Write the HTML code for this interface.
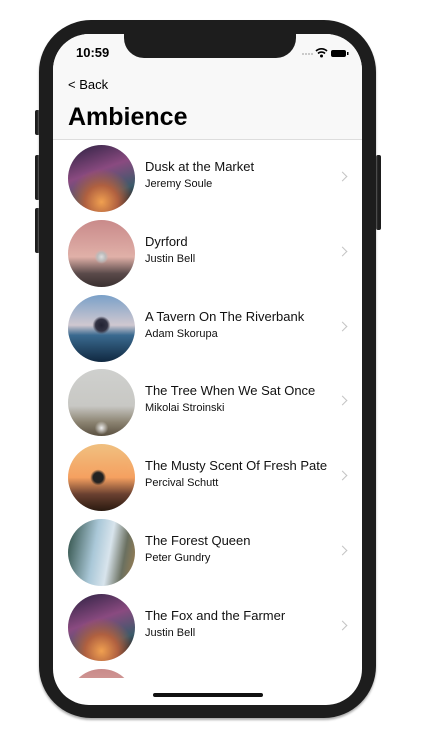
<!DOCTYPE html><html><head><style>
body{margin:0;width:421px;height:749px;background:#fff;position:relative;overflow:hidden;font-family:"Liberation Sans",sans-serif}
.ph{position:absolute;left:39px;top:20px;width:337px;height:698px;background:#1d1d1d;border-radius:52px;box-shadow:0 2px 2px #aaa}
.btn{position:absolute;background:#1d1d1d;width:5px;border-radius:2px}
.scr{position:absolute;left:53px;top:34px;width:309px;height:671px;background:#fff;border-radius:36px;overflow:hidden}
.hdr{position:absolute;left:0;top:0;width:309px;height:105px;background:#f8f8f8;border-bottom:1px solid #ddd}
.notch{position:absolute;left:71px;top:-2px;width:172px;height:26px;background:#1d1d1d;border-radius:0 0 20px 20px}
.time{position:absolute;left:23px;top:11px;font-size:13px;font-weight:bold}
.back{position:absolute;left:15px;top:43px;font-size:13px}
.ttl{position:absolute;left:15px;top:69px;font-size:25px;font-weight:bold}
.list{position:absolute;left:0;top:106px;width:309px;height:538px;overflow:hidden}
.row{position:absolute;left:0;height:75px;width:309px}
.av{position:absolute;left:15px;top:5px;width:67px;height:67px;border-radius:50%}
.t{position:absolute;left:92px;top:19px;font-size:13px;color:#111}
.s{position:absolute;left:92px;top:38px;font-size:11px;color:#111}
.ch{position:absolute;left:286px;top:33px;width:6px;height:6px;border-right:1.3px solid #c4c4c4;border-top:1.3px solid #c4c4c4;transform:rotate(45deg)}
.home{position:absolute;left:100px;top:659px;width:110px;height:4px;background:#111;border-radius:2px}
.g1{background:radial-gradient(circle at 50% 85%,#f0a050 0,#b06040 25%,transparent 50%),linear-gradient(160deg,#2a2040,#8a4a80 40%,#3b5a6a 70%,#111 90%)}
.g2{background:radial-gradient(circle at 50% 55%,#ddd 0,#bbb 8%,transparent 14%),linear-gradient(#c98a8a,#e0b0a8 55%,#5a4a4a 80%,#3a3030)}
.g3{background:radial-gradient(circle at 50% 45%,#223 0,#334 12%,transparent 18%),linear-gradient(#7aa0c8,#d0c8d0 45%,#3a6a90 60%,#102840)}
.g4{background:radial-gradient(circle at 50% 88%,#eee 0,transparent 10%),linear-gradient(#cfd0ce,#c8c8c4 55%,#8a8270 80%,#5a5040)}
.g5{background:radial-gradient(circle at 45% 50%,#222 0,#222 10%,transparent 16%),linear-gradient(#f0c080,#f5a060 50%,#6a4030 75%,#2a1a10)}
.g6{background:linear-gradient(100deg,#2a4a40,#aac8d8 40%,#d8e4ec 60%,#6a7060 80%,#a08050)}
</style></head><body>
<div class="btn" style="left:35px;top:110px;height:25px"></div>
<div class="btn" style="left:35px;top:155px;height:45px"></div>
<div class="btn" style="left:35px;top:208px;height:45px"></div>
<div class="btn" style="left:376px;top:155px;height:75px"></div>
<div class="ph"></div>
<div class="scr">
<div class="hdr"></div>
<div class="notch"></div>
<div class="time">10:59</div>
<svg style="position:absolute;left:248px;top:13px" width="50" height="12"><g fill="#bbb"><circle cx="2" cy="7" r="1"/><circle cx="5" cy="7" r="1"/><circle cx="8" cy="7" r="1"/><circle cx="11" cy="7" r="1"/></g><path d="M15 4a8 8 0 0 1 11 0M17 6.5a5 5 0 0 1 7 0" stroke="#000" stroke-width="1.6" fill="none"/><circle cx="20.5" cy="9" r="1.5"/><rect x="30" y="3" width="15" height="7" rx="2"/><rect x="46" y="5" width="1.5" height="3"/></svg>
<div class="back">&lt; Back</div>
<div class="ttl">Ambience</div>
<div class="list">
<div class="row" style="top:0"><div class="av g1"></div><div class="t">Dusk at the Market</div><div class="s">Jeremy Soule</div><div class="ch"></div></div>
<div class="row" style="top:75px"><div class="av g2"></div><div class="t">Dyrford</div><div class="s">Justin Bell</div><div class="ch"></div></div>
<div class="row" style="top:150px"><div class="av g3"></div><div class="t">A Tavern On The Riverbank</div><div class="s">Adam Skorupa</div><div class="ch"></div></div>
<div class="row" style="top:224px"><div class="av g4"></div><div class="t">The Tree When We Sat Once</div><div class="s">Mikolai Stroinski</div><div class="ch"></div></div>
<div class="row" style="top:299px"><div class="av g5"></div><div class="t">The Musty Scent Of Fresh Pate</div><div class="s">Percival Schutt</div><div class="ch"></div></div>
<div class="row" style="top:374px"><div class="av g6"></div><div class="t">The Forest Queen</div><div class="s">Peter Gundry</div><div class="ch"></div></div>
<div class="row" style="top:449px"><div class="av g1"></div><div class="t">The Fox and the Farmer</div><div class="s">Justin Bell</div><div class="ch"></div></div>
<div class="row" style="top:524px"><div class="av g2"></div></div>
</div>
<div class="home"></div>
</div>
</body></html>
